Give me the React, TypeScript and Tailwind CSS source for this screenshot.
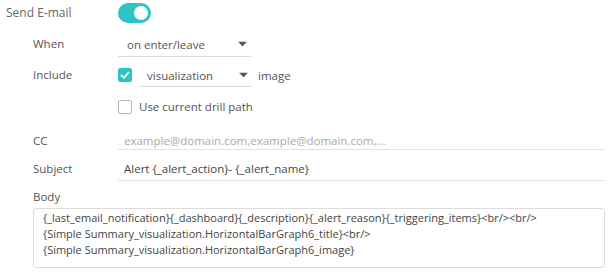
import React from "react";

const font = { fontFamily: '"Open Sans", "Noto Sans", sans-serif' };

function Caret() {
  return (
    <svg width="9" height="5" viewBox="0 0 9 5" className="absolute right-[4px] top-1/2 -translate-y-1/2">
      <path d="M0 0 L9 0 L4.5 5 Z" fill="#555" />
    </svg>
  );
}

function Check({ checked }: { checked: boolean }) {
  return checked ? (
    <div className="w-[14px] h-[14px] bg-[#2ec4c6] rounded-[2px] flex items-center justify-center">
      <svg width="10" height="8" viewBox="0 0 10 8">
        <path d="M1 4 L4 6.8 L9 1" stroke="white" strokeWidth="1.8" fill="none" />
      </svg>
    </div>
  ) : (
    <div className="w-[14px] h-[14px] border border-[#b5b5b5] rounded-[2px] bg-white" />
  );
}

export default function App() {
  return (
    <div className="w-[609px] h-[272px] bg-white relative text-[11.5px] text-[#555]" style={font}>
      {/* Send E-mail */}
      <div className="flex items-center h-[26px]">
        <div className="w-[118px] pl-[6px] text-[12px] text-[#666]">Send E-mail</div>
        <div className="w-[33px] h-[20px] rounded-full bg-[#2ec4c6] relative">
          <div className="absolute right-[3px] top-[3px] w-[14px] h-[14px] rounded-full bg-white" />
        </div>
      </div>
      {/* When */}
      <div className="flex items-center h-[32px] mt-[2px]">
        <div className="w-[118px] pl-[33px] text-[#555]">When</div>
        <div className="relative w-[133px] h-[26px] border-b border-[#dcdcdc] flex items-center pl-[9px] pt-[2px] text-[#555]">
          on enter/leave
          <Caret />
        </div>
      </div>
      {/* Include */}
      <div className="flex items-center h-[30px]">
        <div className="w-[118px] pl-[33px]">Include</div>
        <Check checked />
        <div className="relative ml-[7px] w-[113px] h-[24px] border-b border-[#dcdcdc] flex items-center pl-[8px] pt-[2px] text-[#555]">
          visualization
          <Caret />
        </div>
        <div className="ml-[6px] pt-[1px]">image</div>
      </div>
      {/* Drill path */}
      <div className="flex items-center h-[30px] mt-[2px]">
        <div className="w-[118px]" />
        <Check checked={false} />
        <div className="ml-[7px]">Use current drill path</div>
      </div>
      {/* CC */}
      <div className="flex items-center h-[32px] mt-[3px]">
        <div className="w-[118px] pl-[33px]">CC</div>
        <div className="w-[487px] h-[18px] border-b border-[#e3e3e3] flex items-center pl-[6px] text-[#aaa]">
          example@domain.com,example@domain.com,...
        </div>
      </div>
      {/* Subject */}
      <div className="flex items-center h-[24px]">
        <div className="w-[118px] pl-[33px]">Subject</div>
        <div className="w-[487px] h-[24px] border-b border-[#e3e3e3] flex items-center pl-[6px] text-[#444]">
          Alert {"{_alert_action}"}- {"{_alert_name}"}
        </div>
      </div>
      {/* Body */}
      <div className="pl-[33px] mt-[8px] leading-[16px]">Body</div>
      <div className="ml-[33px] mt-[3px] w-[572px] h-[60px] border border-[#dcdcdc] rounded-[3px] px-[9px] pt-[1px] leading-[16px] text-[11px] text-[#444]">
        <div>{"{_last_email_notification}{_dashboard}{_description}{_alert_reason}{_triggering_items}<br/><br/>"}</div>
        <div>{"{Simple Summary_visualization.HorizontalBarGraph6_title}<br/>"}</div>
        <div>{"{Simple Summary_visualization.HorizontalBarGraph6_image}"}</div>
      </div>
    </div>
  );
}
